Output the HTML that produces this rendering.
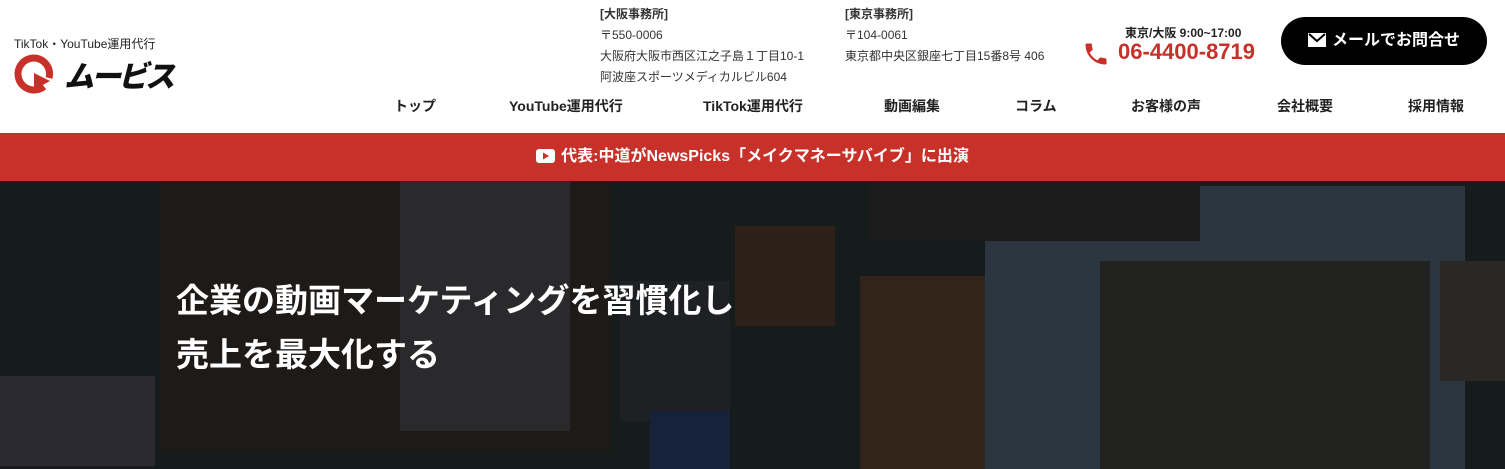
<!DOCTYPE html><html><head><meta charset="utf-8"><style>
*{margin:0;padding:0;box-sizing:border-box}
html,body{width:1505px;height:469px;overflow:hidden}
body{background:#fff;font-family:"Liberation Sans","Noto Sans CJK JP",sans-serif;color:#222;position:relative}
.a{position:absolute;white-space:nowrap}
.addr{font-size:12px;line-height:21px;color:#333}
.nav{top:96px;font-size:14px;font-weight:bold;color:#222}
.hero{position:absolute;top:181px;left:0;width:1505px;height:288px;background:#161c1c;overflow:hidden}
.hero div{position:absolute}
</style></head><body>
<div class="a" style="left:14px;top:35px;font-size:12px;color:#222">TikTok・YouTube運用代行</div>
<svg class="a" style="left:14px;top:54px" width="40" height="40" viewBox="0 0 40 40"><path d="M20 4a16 16 0 1 0 10 28.5" fill="none" stroke="#c8302a" stroke-width="7"/><path d="M20 4a16 16 0 0 1 15 20" fill="none" stroke="#c8302a" stroke-width="7"/><path d="M20 19l16 8-16 9z" fill="#c8302a"/></svg>
<div class="a" style="left:64px;top:52px;font-size:30px;font-weight:900;font-style:italic;color:#111;letter-spacing:-3px">ムービス</div>
<div class="a addr" style="left:600px;top:4px"><b>[大阪事務所]</b><br>〒550-0006<br>大阪府大阪市西区江之子島１丁目10-1<br>阿波座スポーツメディカルビル604</div>
<div class="a addr" style="left:845px;top:4px"><b>[東京事務所]</b><br>〒104-0061<br>東京都中央区銀座七丁目15番8号 406</div>
<div class="a" style="left:1125px;top:24px;font-size:12px;font-weight:bold">東京/大阪 9:00~17:00</div>
<svg class="a" style="left:1082px;top:40px" width="28" height="28" viewBox="0 0 24 24"><path d="M6.6 10.8c1.4 2.8 3.8 5.1 6.6 6.6l2.2-2.2c.3-.3.7-.4 1-.2 1.1.4 2.3.6 3.6.6.6 0 1 .4 1 1V20c0 .6-.4 1-1 1C10.6 21 3 13.4 3 4c0-.6.4-1 1-1h3.5c.6 0 1 .4 1 1 0 1.3.2 2.5.6 3.6.1.3 0 .7-.2 1z" fill="#c8302a"/></svg>
<div class="a" style="left:1118px;top:39px;font-size:22px;font-weight:bold;color:#c8302a">06-4400-8719</div>
<div class="a" style="left:1281px;top:17px;width:206px;height:48px;border-radius:24px;background:#000;color:#fff;font-size:16px;font-weight:bold;line-height:48px;text-align:center">
<svg style="vertical-align:-2px;margin-right:6px" width="18" height="14" viewBox="0 0 18 14"><rect width="18" height="14" fill="#fff"/><path d="M1 1l8 7 8-7" fill="none" stroke="#000" stroke-width="2"/></svg>メールでお問合せ</div>
<div class="a nav" style="left:394px">トップ</div>
<div class="a nav" style="left:509px">YouTube運用代行</div>
<div class="a nav" style="left:703px">TikTok運用代行</div>
<div class="a nav" style="left:884px">動画編集</div>
<div class="a nav" style="left:1015px">コラム</div>
<div class="a nav" style="left:1131px">お客様の声</div>
<div class="a nav" style="left:1277px">会社概要</div>
<div class="a nav" style="left:1408px">採用情報</div>
<div class="a" style="left:0;top:133px;width:1505px;height:48px;background:#c8302a;color:#fff;font-size:16px;font-weight:bold;text-align:center;line-height:48px">
<svg style="vertical-align:-2px;margin-right:6px" width="19" height="14" viewBox="0 0 19 14"><rect width="19" height="14" rx="3" fill="#fff"/><path d="M7 3.5l6 3.5-6 3.5z" fill="#c8302a"/></svg>代表:中道がNewsPicks「メイクマネーサバイブ」に出演</div>
<div class="hero">
<div style="left:160px;top:0;width:450px;height:270px;background:#1e1a18"></div>
<div style="left:400px;top:0;width:170px;height:250px;background:#2a2a2c"></div>
<div style="left:0;top:195px;width:155px;height:90px;background:#2a2a30"></div>
<div style="left:620px;top:100px;width:110px;height:140px;background:#1e2024"></div>
<div style="left:735px;top:45px;width:100px;height:100px;background:#2c2018"></div>
<div style="left:860px;top:95px;width:130px;height:240px;background:#33241a"></div>
<div style="left:985px;top:5px;width:480px;height:290px;background:#2c3640"></div>
<div style="left:1100px;top:80px;width:330px;height:210px;background:#222220"></div>
<div style="left:1440px;top:80px;width:65px;height:120px;background:#2a2724"></div>
<div style="left:870px;top:0;width:330px;height:60px;background:#1c1c1c"></div>
<div style="left:650px;top:230px;width:80px;height:60px;background:#16223a"></div>
</div>
<div class="a" style="left:176px;top:274px;font-size:33px;font-weight:bold;color:#fff;line-height:54px">企業の動画マーケティングを習慣化し<br>売上を最大化する</div>
</body></html>
